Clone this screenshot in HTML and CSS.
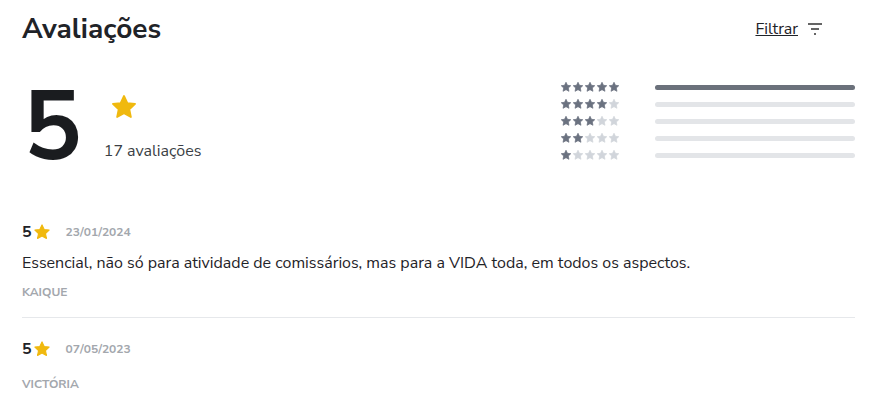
FILE: index.html
```html
<!DOCTYPE html>
<html lang="pt-BR">

<head>
    <meta charset="UTF-8">
    <meta name="viewport" content="width=device-width, initial-scale=1.0">
    <title>Avaliações</title>
    <link rel="stylesheet" href="styles.css">
</head>

<body>
    <section class="reviews">
        <header class="reviews-header">
            <h1>Avaliações</h1>
            <a href="#" class="filter">
                <span>Filtrar</span>
                <svg width="16" height="14" viewBox="0 0 16 14">
                    <path d="M1 2h14M4 7h8M7 12h2" stroke="#333" stroke-width="1.3" fill="none" />
                </svg>
            </a>
        </header>

        <div class="summary">
            <div class="score">
                <span class="score-number">5</span>
                <div class="score-info">
                    <svg class="star-big" viewBox="0 0 24 24"><path d="M12 2.5l2.9 6.1 6.6.8-4.9 4.6 1.3 6.6L12 17.3l-5.9 3.3 1.3-6.6-4.9-4.6 6.6-.8z" fill="#f0b90f" stroke="#f0b90f" stroke-width="1.5" stroke-linejoin="round" /></svg>
                    <span class="score-count">17 avaliações</span>
                </div>
            </div>

            <div class="distribution">
                <div class="dist-row">
                    <div class="stars" data-n="5"></div>
                    <div class="bar"><div class="bar-fill" style="width: 100%"></div></div>
                </div>
                <div class="dist-row">
                    <div class="stars" data-n="4"></div>
                    <div class="bar"><div class="bar-fill" style="width: 0%"></div></div>
                </div>
                <div class="dist-row">
                    <div class="stars" data-n="3"></div>
                    <div class="bar"><div class="bar-fill" style="width: 0%"></div></div>
                </div>
                <div class="dist-row">
                    <div class="stars" data-n="2"></div>
                    <div class="bar"><div class="bar-fill" style="width: 0%"></div></div>
                </div>
                <div class="dist-row">
                    <div class="stars" data-n="1"></div>
                    <div class="bar"><div class="bar-fill" style="width: 0%"></div></div>
                </div>
            </div>
        </div>

        <div class="review">
            <div class="review-top">
                <span class="review-score">5</span>
                <svg class="star-small" viewBox="0 0 24 24"><path d="M12 2.5l2.9 6.1 6.6.8-4.9 4.6 1.3 6.6L12 17.3l-5.9 3.3 1.3-6.6-4.9-4.6 6.6-.8z" fill="#f0b90f" stroke="#f0b90f" stroke-width="1.5" stroke-linejoin="round" /></svg>
                <span class="review-date">23/01/2024</span>
            </div>
            <p class="review-text">Essencial, não só para atividade de comissários, mas para a VIDA toda, em todos os aspectos.</p>
            <span class="review-author">KAIQUE</span>
        </div>

        <div class="review">
            <div class="review-top">
                <span class="review-score">5</span>
                <svg class="star-small" viewBox="0 0 24 24"><path d="M12 2.5l2.9 6.1 6.6.8-4.9 4.6 1.3 6.6L12 17.3l-5.9 3.3 1.3-6.6-4.9-4.6 6.6-.8z" fill="#f0b90f" stroke="#f0b90f" stroke-width="1.5" stroke-linejoin="round" /></svg>
                <span class="review-date">07/05/2023</span>
            </div>
            <span class="review-author">VICTÓRIA</span>
        </div>
    </section>

    <script>
        // desenha as estrelas da distribuição
        var starPath = 'M12 2.5l2.9 6.1 6.6.8-4.9 4.6 1.3 6.6L12 17.3l-5.9 3.3 1.3-6.6-4.9-4.6 6.6-.8z';
        document.querySelectorAll('.stars').forEach(function (el) {
            var n = parseInt(el.dataset.n);
            var html = '';
            for (var i = 0; i < 5; i++) {
                var color = i < n ? '#6b7280' : '#d1d5db';
                html += '<svg viewBox="0 0 24 24"><path d="' + starPath + '" fill="' + color + '" stroke="' + color + '" stroke-width="1.5" stroke-linejoin="round"/></svg>';
            }
            el.innerHTML = html;
        });
    </script>
</body>

</html>
```

FILE: styles.css
```css
body {
    font-family: "Nunito Sans", Lato, sans-serif;
    margin: 0;
    padding: 0;
    background: #fff;
    color: #1f2328;
}

.reviews {
    width: 833px;
    margin-left: 22px;
}

.reviews-header {
    display: flex;
    justify-content: space-between;
    align-items: center;
    padding-top: 10px;
}

.reviews-header h1 {
    margin: 0;
    font-size: 28px;
    font-weight: 700;
    color: #1f2328;
}

.filter {
    display: flex;
    align-items: center;
    gap: 9px;
    margin-right: 32px;
    color: #1f2328;
    font-size: 16px;
    text-decoration: none;
}

.filter span {
    text-decoration: underline;
}

.summary {
    display: flex;
    justify-content: space-between;
    margin-top: 37px;
}

.score {
    display: flex;
    align-items: flex-start;
    padding-left: 1px;
}

.score-number {
    font-size: 98px;
    font-weight: 700;
    line-height: 84px;
    color: #1a1c1f;
}

.score-info {
    display: flex;
    flex-direction: column;
    margin-left: 22px;
    padding-top: 8px;
}

.star-big {
    width: 28px;
    height: 28px;
    margin-left: 6px;
}

.score-count {
    margin-top: 19px;
    font-size: 16px;
    color: #3b3f45;
}

.distribution {
    display: flex;
    flex-direction: column;
    gap: 5px;
    margin-top: -4px;
}

.dist-row {
    display: flex;
    align-items: center;
    gap: 35px;
    height: 12px;
}

.stars {
    display: flex;
}

.stars svg {
    width: 12px;
    height: 12px;
}

.bar {
    width: 200px;
    height: 5px;
    border-radius: 3px;
    background: #e3e5e8;
}

.bar-fill {
    height: 100%;
    border-radius: 3px;
    background: #6b717b;
}

.review {
    padding: 12px 0 17px;
    border-bottom: 1px solid #e6e8eb;
    margin-top: 40px;
}

.review + .review {
    border-bottom: none;
    margin-top: 0;
    padding-top: 20px;
}

.review-top {
    display: flex;
    align-items: center;
}

.review-score {
    font-size: 16px;
    font-weight: 700;
}

.star-small {
    width: 18px;
    height: 18px;
    margin-left: 1px;
}

.review-date {
    margin-left: 15px;
    font-size: 12px;
    font-weight: 700;
    color: #a3a7ad;
}

.review-text {
    margin: 9px 0 10px;
    font-size: 16px;
    color: #1f2328;
}

.review-author {
    display: block;
    font-size: 12px;
    font-weight: 700;
    color: #a3a7ad;
}

.review + .review .review-author {
    margin-top: 16px;
}
```
